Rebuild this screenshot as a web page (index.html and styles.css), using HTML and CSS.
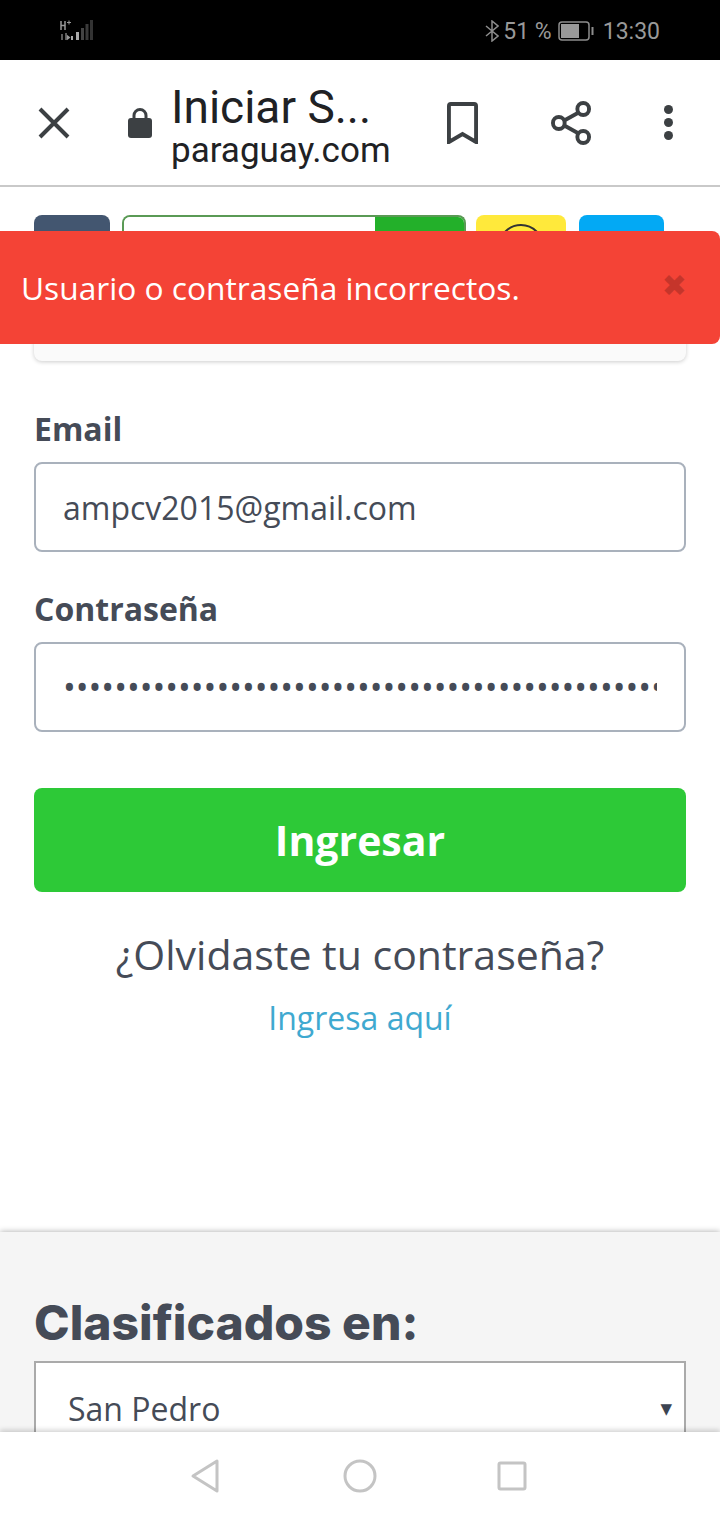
FILE: index.html
```html
<!DOCTYPE html>
<html lang="es">
<head>
  <meta charset="UTF-8" />
  <title>Iniciar Sesión</title>
  <link rel="stylesheet" href="styles.css">
</head>
<body>
<div class="telefono">

  <!-- ========== Barra de estado ========== -->
  <div class="estado">
    <svg class="senal" width="34" height="22" viewBox="0 0 34 22">
      <path d="M1 2v9M5 2v9M1 6.500h4" stroke="#999" stroke-width="1.500" fill="none"/>
      <path d="M7 3.500h4M9 1.500v4" stroke="#999" stroke-width="1" fill="none"/>
      <path d="M2 15v6M6 14v7M7.500 17l2 1.500-2 1.500z" stroke="#999" stroke-width="1.200" fill="#999"/>
      <rect x="11" y="17" width="2" height="4" fill="#aaa"/>
      <rect x="16" y="13" width="3" height="8" fill="#aaa"/>
      <rect x="21" y="9" width="3" height="12" fill="#444"/>
      <rect x="25.500" y="5" width="3" height="16" fill="#3a3a3a"/>
      <rect x="30" y="1" width="3" height="20" fill="#333"/>
    </svg>
    <div class="estado-der">
      <svg width="14" height="22" viewBox="0 0 14 22">
        <path d="M1 6l12 10-6 5V1l6 5L1 16" stroke="#8d8d8d" stroke-width="1.500" fill="none"/>
      </svg>
      <span class="pct">51 %</span>
      <svg class="bateria" width="36" height="20" viewBox="0 0 36 20">
        <rect x="1" y="1" width="30" height="18" rx="3" stroke="#8d8d8d" stroke-width="1.500" fill="none"/>
        <rect x="3" y="3" width="18" height="14" fill="#999"/>
        <rect x="33.500" y="6" width="2" height="8" fill="#8d8d8d"/>
      </svg>
      <span class="hora">13:30</span>
    </div>
  </div>

  <!-- ========== Barra del navegador ========== -->
  <div class="barra">
    <svg class="ico-cerrar" width="32" height="32" viewBox="0 0 32 32">
      <path d="M2 2l28 28M30 2L2 30" stroke="#3c4043" stroke-width="4" fill="none"/>
    </svg>
    <svg class="ico-candado" width="24" height="30" viewBox="0 0 24 30">
      <path d="M6 11V7.500a6 6 0 0 1 12 0V11" stroke="#3c4043" stroke-width="3" fill="none"/>
      <rect x="0" y="10" width="24" height="20" rx="3" fill="#3c4043"/>
    </svg>
    <div class="titulos">
      <div class="titulo">Iniciar S...</div>
      <div class="dominio">paraguay.com</div>
    </div>
    <svg class="ico-marca" width="31" height="42" viewBox="0 0 32 42" preserveAspectRatio="none">
      <path d="M2 40V4a2 2 0 0 1 2-2h24a2 2 0 0 1 2 2v36L16 32z" stroke="#3c4043" stroke-width="4" fill="none" stroke-linejoin="miter"/>
    </svg>
    <svg class="ico-compartir" width="41" height="44" viewBox="0 0 42 44" preserveAspectRatio="none">
      <path d="M33 9L9 22l24 13" stroke="#3c4043" stroke-width="4" fill="none"/>
      <circle cx="33" cy="8" r="6" stroke="#3c4043" stroke-width="4" fill="#fff"/>
      <circle cx="8" cy="22" r="6" stroke="#3c4043" stroke-width="4" fill="#fff"/>
      <circle cx="33" cy="36" r="6" stroke="#3c4043" stroke-width="4" fill="#fff"/>
    </svg>
    <div class="ico-menu"><i></i><i></i><i></i></div>
  </div>

  <!-- ========== Contenido ========== -->
  <div class="contenido">
    <div class="alerta">
      <span>Usuario o contraseña incorrectos.</span>
      <span class="alerta-x">✖</span>
    </div>

    <div class="principal">
      <div class="redes">
        <div class="red red-azul"></div>
        <div class="red-buscar"><div class="buscar-input"></div><div class="buscar-btn"></div></div>
        <div class="red red-amarillo"><div class="circulo"></div></div>
        <div class="red red-celeste"></div>
      </div>
      <div class="tarjeta"></div>

      <form class="formulario" autocomplete="off">
        <label class="etiqueta" for="email">Email</label>
        <input class="campo" id="email" type="text" value="ampcv2015@gmail.com">
        <label class="etiqueta" for="clave">Contraseña</label>
        <input class="campo campo-clave" id="clave" type="password" value="aaaaaaaaaaaaaaaaaaaaaaaaaaaaaaaaaaaaaaaaaaaaaaaaaaaaaaaaaaaaaaaaaaaaaaaa">
        <button class="btn-ingresar" type="button">Ingresar</button>
      </form>
      <p class="olvido">¿Olvidaste tu contraseña?</p>
      <a class="enlace" href="#">Ingresa aquí</a>
    </div>

    <div class="pie">
      <h2>Clasificados en:</h2>
      <div class="selector"><span>San Pedro</span><span class="flecha">▼</span></div>
    </div>
  </div>

  <!-- ========== Navegación ========== -->
  <div class="nav">
    <svg width="30" height="36" viewBox="0 0 30 36">
      <path d="M27 3v30L3 18z" stroke="#c4c4c4" stroke-width="3" fill="none" stroke-linejoin="round"/>
    </svg>
    <svg width="34" height="34" viewBox="0 0 34 34">
      <circle cx="17" cy="17" r="15" stroke="#c4c4c4" stroke-width="3" fill="none"/>
    </svg>
    <svg class="nav-cuadro" width="30" height="30" viewBox="0 0 30 30">
      <rect x="2" y="2" width="26" height="26" rx="1.500" stroke="#c4c4c4" stroke-width="3" fill="none"/>
    </svg>
  </div>
</div>
</body>
</html>
```

FILE: styles.css
```css
*{box-sizing:border-box}
body{margin:0;background:#fff;font-family:"Open Sans",sans-serif;color:#454b57}
.telefono{width:720px;height:1520px;display:flex;flex-direction:column;overflow:hidden}

/* ---------- Barra de estado ---------- */
.estado{
  height:60px;background:#000;color:#999;display:flex;align-items:center;justify-content:space-between;
  padding:2px 60px 0;font-family:Roboto,sans-serif;font-size:23px;
}
.senal{margin-top:-2px}
.estado-der{display:flex;align-items:center}
.estado-der svg{margin-top:-1px}
.pct{margin-left:4px}
.bateria{margin-left:6px}
.hora{margin-left:9px;font-size:23px}

/* ---------- Barra del navegador ---------- */
.barra{
  height:127px;display:flex;align-items:center;background:#fff;position:relative;z-index:2;
  border-bottom:2px solid #c9c9c9;padding-left:38px;
}
.ico-cerrar{flex:none}
.ico-candado{flex:none;margin-left:58px}
.titulos{width:230px;margin-left:20px;font-family:Roboto,sans-serif;color:#202124;margin-top:7px}
.titulo{font-size:46px;line-height:48px;white-space:nowrap;margin-left:-1px}
.dominio{font-size:35px;line-height:39px;white-space:nowrap;margin-left:-1px}
.ico-marca{flex:none;margin-left:45px}
.ico-compartir{flex:none;margin-left:73px}
.ico-menu{display:flex;flex-direction:column;gap:4px;margin-left:72px}
.ico-menu i{display:block;width:9px;height:9px;border-radius:50%;background:#3c4043}

/* ---------- Contenido ---------- */
.contenido{flex:1;min-height:0;position:relative;overflow:hidden;display:flex;flex-direction:column}
.principal{height:1045px;padding:28px 34px 0;background:#fff;flex:none}

.alerta{
  position:absolute;z-index:3;top:44px;left:0;width:720px;height:113px;background:#f44336;color:#fff;
  border-radius:0 8px 8px 0;display:flex;align-items:center;justify-content:space-between;
  padding:0 33px 0 21px;font-size:31.700px;
}
.alerta-x{color:#c5352b;font-size:30px;font-family:"DejaVu Sans",sans-serif;margin-top:-4px}

/* Botones de redes, tapados por la alerta */
.redes{display:flex;height:60px;width:630px}
.red{height:60px;border-radius:8px 8px 0 0}
.red-azul{width:76px;background:#435670}
.red-buscar{
  width:344px;height:60px;margin-left:12px;display:flex;border:2px solid #5a9a55;border-bottom:0;
  border-radius:8px 8px 0 0;overflow:hidden;
}
.buscar-input{width:251px;background:#fff}
.buscar-btn{flex:1;background:#23b02a}
.red-amarillo{width:90px;margin-left:10px;background:#ffe93b;display:flex;justify-content:center;padding-top:9px}
.circulo{width:46px;height:46px;border:2px solid #333;border-radius:50%}
.red-celeste{width:85px;margin-left:13px;background:#03a9f4}
.tarjeta{
  height:86px;background:#fafafa;border-radius:0 0 8px 8px;box-shadow:0 1px 4px rgba(0,0,0,.2);
}

/* ---------- Formulario ---------- */
.formulario{display:flex;flex-direction:column;margin-top:48px}
.etiqueta{font-size:32px;font-weight:bold;line-height:40px;margin-bottom:13px}
.campo{
  width:652px;height:90px;border:2px solid #a9b1bc;border-radius:8px;padding:0 27px;
  font:32px "Open Sans",sans-serif;color:#454b57;background:#fff;margin-bottom:37px;outline:none;
}
.campo-clave{margin-bottom:56px;font-size:34px}
.btn-ingresar{
  height:104px;border:none;border-radius:8px;background:#2dc937;color:#fff;
  font:bold 41px "Open Sans",sans-serif;
}
.olvido{margin:35px 0 0;text-align:center;font-size:41px;line-height:54px}
.enlace{display:block;margin-top:15px;text-align:center;font-size:32px;line-height:44px;color:#3fa9d0;text-decoration:none}

/* ---------- Pie ---------- */
.pie{flex:1;background:#f5f5f5;box-shadow:0 0 6px rgba(0,0,0,.35);padding:61px 34px 0}
.pie h2{margin:0 0 8px;font-family:Inter,sans-serif;font-weight:800;font-size:48px;line-height:60px}
.selector{
  height:90px;border:2px solid #aaa;border-bottom:0;background:#fff;display:flex;justify-content:space-between;
  padding:24px 12px 0 32px;font-size:32px;line-height:44px;
}
.flecha{font-size:15px;color:#3c4452;font-family:"DejaVu Sans",sans-serif}

/* ---------- Navegación ---------- */
.nav{
  height:88px;background:#fff;display:flex;align-items:center;justify-content:center;gap:123px;
  box-shadow:0 -2px 5px rgba(0,0,0,.18);position:relative;
}
.nav-cuadro{margin-left:-3px;margin-right:3px}
```
